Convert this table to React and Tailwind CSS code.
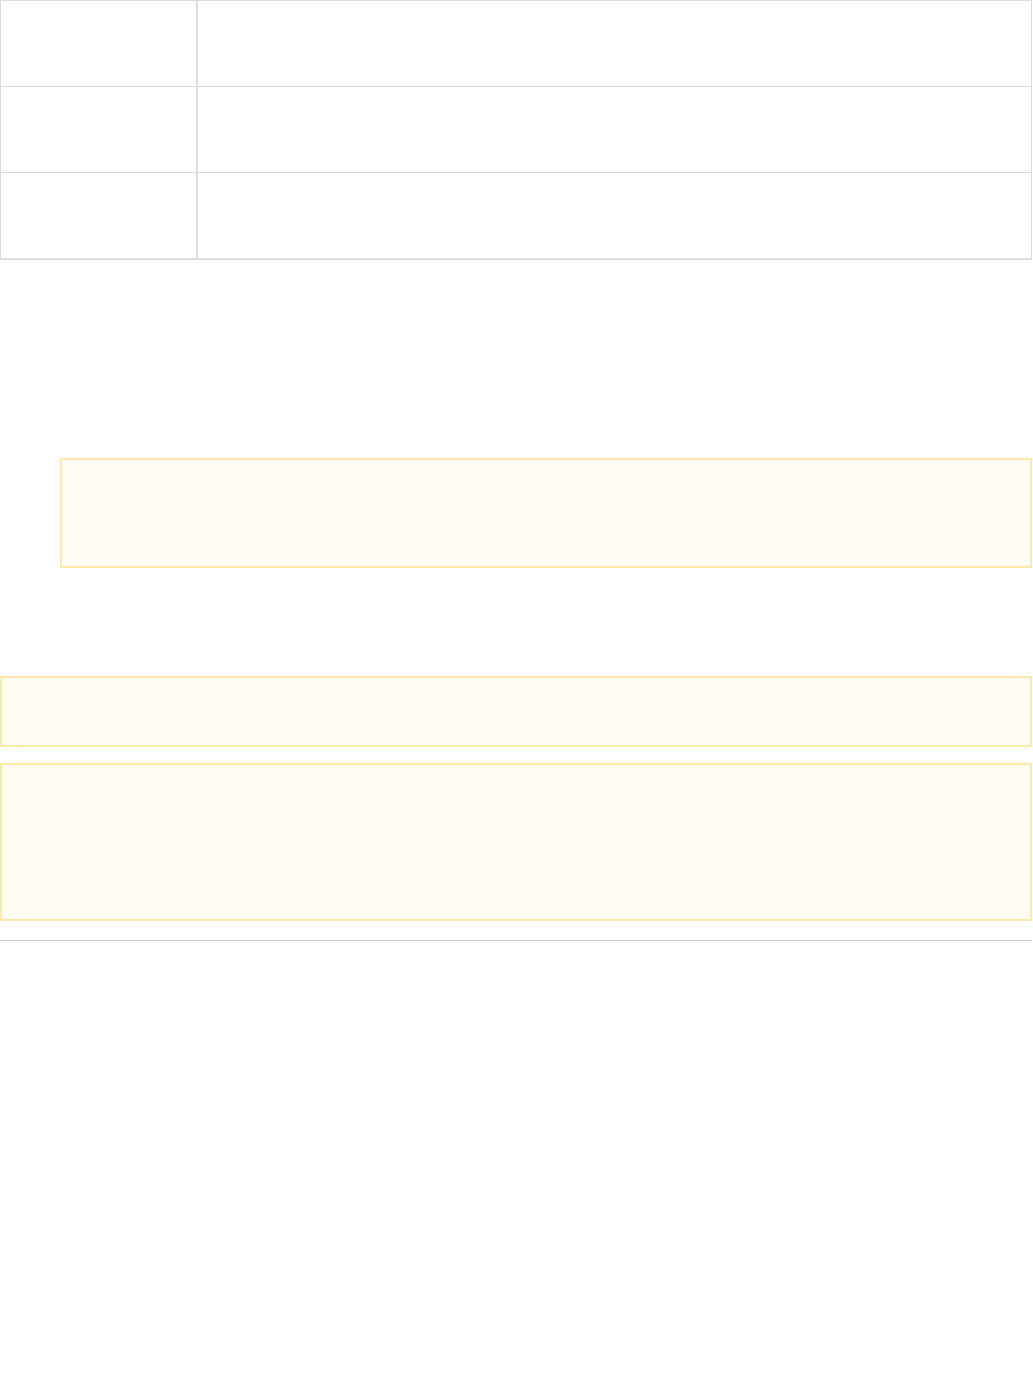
export default function App() {
  return (
    <div className="w-[1032px] bg-white" style={{ fontFamily: '"Liberation Sans", Arial, sans-serif' }}>
      <table className="w-full border-collapse border-b-2 border-[#dcdcdc]">
        <tbody>
          {[0, 1, 2].map((i) => (
            <tr key={i} className="h-[86px]">
              <td className="w-[196px] border border-[#dcdcdc] border-r-2"></td>
              <td className="border border-[#dcdcdc]"></td>
            </tr>
          ))}
        </tbody>
      </table>
      <div className="h-[198px]"></div>
      <div className="ml-[60px] h-[110px] border-2 border-[#ffe9a8] bg-[#fffcf3]"></div>
      <div className="h-[108px]"></div>
      <div className="h-[71px] border-2 border-[#ffe9a8] bg-[#fffcf3]"></div>
      <div className="h-[16px]"></div>
      <div className="h-[158px] border-2 border-[#ffe9a8] bg-[#fffcf3]"></div>
      <div className="h-[19px]"></div>
      <div className="h-px bg-[#cccccc]"></div>
      <div className="h-[451px]"></div>
    </div>
  );
}
